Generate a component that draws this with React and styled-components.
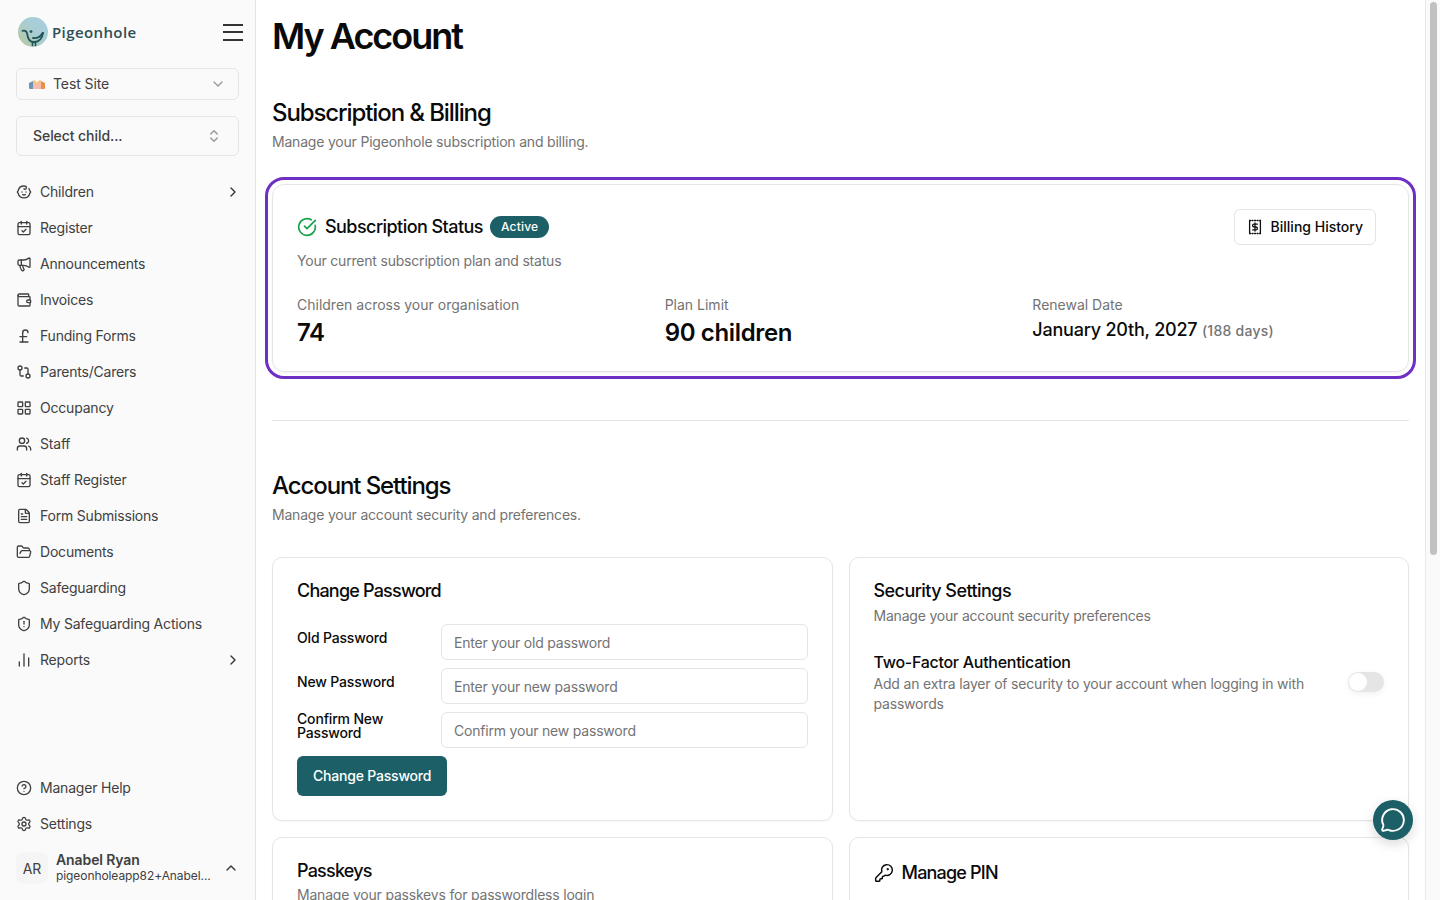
import styled, { createGlobalStyle } from "styled-components";
import {
  Baby,
  CalendarCheck,
  ChartNoAxesColumn,
  ChevronDown,
  ChevronRight,
  ChevronUp,
  ChevronsUpDown,
  CircleCheckBig,
  CircleHelp,
  FileText,
  FolderOpen,
  GitCompare,
  KeyRound,
  LayoutGrid,
  Megaphone,
  MessageCircle,
  PoundSterling,
  Settings,
  Shield,
  ShieldAlert,
  Users,
  Wallet,
} from "lucide-react";

const BillIcon = () => (
  <svg width="16" height="16" viewBox="0 0 16 16" fill="none" stroke="#111" strokeWidth="1.3" strokeLinecap="round" strokeLinejoin="round">
    <path d="M2.6 1.5v13M13.4 1.5v13" />
    <path d="M2.6 1.5h10.8M2.6 14.5h10.8" strokeDasharray="1 1.5" />
    <path d="M10.4 5.2H7a1.4 1.4 0 0 0 0 2.8h2a1.4 1.4 0 0 1 0 2.8H5.6M8 4v8" />
  </svg>
);

const Logo = () => (
  <svg width="30" height="30" viewBox="0 0 30 30">
    <defs>
      <linearGradient id="logoBg" x1="0" y1="1" x2="1" y2="0">
        <stop offset="0" stopColor="#b7c99a" />
        <stop offset="0.55" stopColor="#a9cdd4" />
        <stop offset="1" stopColor="#a5cfe0" />
      </linearGradient>
    </defs>
    <circle cx="15" cy="15" r="15" fill="url(#logoBg)" />
    <path d="M4.5 13.8c3-.6 4.4.8 4.8 3.6.5 4.6 3 7.8 7 7.6 5-.2 8-4.4 8.8-9.2" fill="none" stroke="#1f5458" strokeWidth="1.8" strokeLinecap="round" />
    <path d="M15 21c4 .6 7.4-1.4 9.6-5" fill="none" stroke="#1f5458" strokeWidth="1.8" strokeLinecap="round" />
    <circle cx="13" cy="14.6" r="1.4" fill="#1f5458" />
    <path d="M14.5 25.5v3M17.5 25.5v3" stroke="#1f5458" strokeWidth="1.6" strokeLinecap="round" />
  </svg>
);

const SiteIcon = () => (
  <svg width="16" height="9" viewBox="0 0 16 9">
    <path d="M0 3 4 1v8H1a1 1 0 0 1-1-1z" fill="#6b94b6" />
    <path d="M4 0.5h8V9H4z" fill="#f7bcae" />
    <path d="M12 1l4 2v5a1 1 0 0 1-1 1h-3z" fill="#e98f4d" />
    <path d="M4 0.5h8L8 5z" fill="#f4ca66" />
    <path d="M5.5 0 8 2.6 10.5 0z" fill="#fafafa" />
  </svg>
);

const topNav = [
  { label: "Children", Icon: Baby, more: true },
  { label: "Register", Icon: CalendarCheck },
  { label: "Announcements", Icon: Megaphone },
  { label: "Invoices", Icon: Wallet },
  { label: "Funding Forms", Icon: PoundSterling },
  { label: "Parents/Carers", Icon: GitCompare },
  { label: "Occupancy", Icon: LayoutGrid },
  { label: "Staff", Icon: Users },
  { label: "Staff Register", Icon: CalendarCheck },
  { label: "Form Submissions", Icon: FileText },
  { label: "Documents", Icon: FolderOpen },
  { label: "Safeguarding", Icon: Shield },
  { label: "My Safeguarding Actions", Icon: ShieldAlert },
  { label: "Reports", Icon: ChartNoAxesColumn, more: true },
];

const bottomNav = [
  { label: "Manager Help", Icon: CircleHelp },
  { label: "Settings", Icon: Settings },
];

const NavRow = ({ label, Icon, more }) => (
  <NavItem>
    <Icon size={16} strokeWidth={2} />
    <NavLabel>{label}</NavLabel>
    {more && <RowChevron size={16} strokeWidth={2} />}
  </NavItem>
);

export default function App() {
  return (
    <>
      <GlobalStyle />
      <Page>
        <Sidebar>
          <Brand>
            <BrandName>
              <Logo />
              <BrandText>Pigeonhole</BrandText>
            </BrandName>
            <Burger aria-label="menu">
              <span />
              <span />
              <span />
            </Burger>
          </Brand>

          <SiteSelect>
            <SiteIcon />
            <SiteName>Test Site</SiteName>
            <ChevronDown size={16} color="#999" />
          </SiteSelect>
          <ChildSelect>
            <span>Select child...</span>
            <ChevronsUpDown size={16} color="#999" />
          </ChildSelect>

          <Nav>
            {topNav.map((item) => (
              <NavRow key={item.label} {...item} />
            ))}
          </Nav>

          <BottomNav>
            {bottomNav.map((item) => (
              <NavRow key={item.label} {...item} />
            ))}
            <UserRow>
              <Avatar>AR</Avatar>
              <UserText>
                <UserName>Anabel Ryan</UserName>
                <UserMail>pigeonholeapp82+Anabel...</UserMail>
              </UserText>
              <ChevronUp size={16} color="#333" />
            </UserRow>
          </BottomNav>
        </Sidebar>

        <Main>
          <PageTitle>My Account</PageTitle>

          <SectionTitle>Subscription &amp; Billing</SectionTitle>
          <SectionSub>Manage your Pigeonhole subscription and billing.</SectionSub>

          <StatusCard>
            <StatusHead>
              <div>
                <StatusTitleRow>
                  <CircleCheckBig size={20} color="#16a34a" strokeWidth={2} />
                  <CardTitle>Subscription Status</CardTitle>
                  <Badge>Active</Badge>
                </StatusTitleRow>
                <CardSub $gap={6}>Your current subscription plan and status</CardSub>
              </div>
              <OutlineButton>
                <BillIcon />
                Billing History
              </OutlineButton>
            </StatusHead>
            <Stats>
              <div>
                <StatLabel>Children across your organisation</StatLabel>
                <StatValue>74</StatValue>
              </div>
              <div>
                <StatLabel>Plan Limit</StatLabel>
                <StatValue>90 children</StatValue>
              </div>
              <div>
                <StatLabel>Renewal Date</StatLabel>
                <RenewValue>
                  January 20th, 2027 <Days>(188 days)</Days>
                </RenewValue>
              </div>
            </Stats>
          </StatusCard>

          <Divider />

          <SectionTitle>Account Settings</SectionTitle>
          <SectionSub>Manage your account security and preferences.</SectionSub>

          <CardGrid>
            <Card>
              <TightTitle>Change Password</TightTitle>
              <PasswordForm>
                <FieldRow>
                  <FieldLabel $pad={7}>Old Password</FieldLabel>
                  <TextInput type="password" placeholder="Enter your old password" />
                </FieldRow>
                <FieldRow>
                  <FieldLabel $pad={7}>New Password</FieldLabel>
                  <TextInput type="password" placeholder="Enter your new password" />
                </FieldRow>
                <FieldRow>
                  <FieldLabel $pad={0}>Confirm New Password</FieldLabel>
                  <TextInput type="password" placeholder="Confirm your new password" />
                </FieldRow>
              </PasswordForm>
              <PrimaryButton>Change Password</PrimaryButton>
            </Card>

            <Card>
              <CardTitle>Security Settings</CardTitle>
              <CardSub $gap={1}>Manage your account security preferences</CardSub>
              <TwoFactor>
                <div>
                  <TwoFactorTitle>Two-Factor Authentication</TwoFactorTitle>
                  <TwoFactorText>
                    Add an extra layer of security to your account when logging in with passwords
                  </TwoFactorText>
                </div>
                <Toggle />
              </TwoFactor>
            </Card>

            <LowerCard>
              <TightTitle>Passkeys</TightTitle>
              <CardSub $gap={0}>Manage your passkeys for passwordless login</CardSub>
            </LowerCard>

            <LowerCard>
              <PinTitle>
                <KeyRound size={20} strokeWidth={1.75} />
                <TightTitle>Manage PIN</TightTitle>
              </PinTitle>
            </LowerCard>
          </CardGrid>
        </Main>

        <ScrollRail>
          <ScrollThumb />
        </ScrollRail>

        <ChatButton aria-label="chat">
          <MessageCircle size={26} strokeWidth={1.75} />
        </ChatButton>
      </Page>
    </>
  );
}

const GlobalStyle = createGlobalStyle`
  html, body {
    margin: 0;
    height: 100%;
    overflow: hidden;
  }
  body {
    font-family: Inter, "Liberation Sans", sans-serif;
    color: #0a0a0a;
    background: #fff;
  }
  * {
    box-sizing: border-box;
  }
`;

const Page = styled.div`
  display: flex;
  height: 100vh;
`;

const Sidebar = styled.aside`
  width: 256px;
  flex-shrink: 0;
  display: flex;
  flex-direction: column;
  padding: 16px;
  background: #fafafa;
  border-right: 1px solid #e5e5e5;
`;

const Brand = styled.div`
  display: flex;
  align-items: center;
  justify-content: space-between;
  height: 32px;
  padding-left: 2px;
`;

const BrandName = styled.div`
  display: flex;
  align-items: center;
  gap: 4px;
`;

const BrandText = styled.span`
  padding-bottom: 1px;
  font-family: "Open Sans", sans-serif;
  font-size: 15px;
  font-weight: 600;
  letter-spacing: 0.4px;
  color: #2f4f55;
`;

const Burger = styled.button`
  display: flex;
  flex-direction: column;
  gap: 5.5px;
  width: 20px;
  margin-right: -4px;
  padding: 0;
  border: 0;
  background: none;

  span {
    display: block;
    height: 2px;
    background: #333;
  }
`;

const SiteSelect = styled.div`
  display: flex;
  align-items: center;
  height: 32px;
  margin-top: 20px;
  padding: 0 12px;
  border: 1px solid #e5e5e5;
  border-radius: 6px;
  font-size: 14px;
  letter-spacing: -0.1px;
  color: #404040;
`;

const SiteName = styled.span`
  flex: 1;
  margin-left: 8px;
  padding-bottom: 2px;
`;

const ChildSelect = styled.div`
  display: flex;
  align-items: center;
  justify-content: space-between;
  height: 40px;
  margin-top: 16px;
  padding: 0 16px;
  border: 1px solid #e5e5e5;
  border-radius: 6px;
  font-size: 14px;
  font-weight: 500;
  letter-spacing: -0.07px;
  color: #404040;

  span {
    padding-bottom: 2px;
  }
`;

const Nav = styled.nav`
  display: flex;
  flex-direction: column;
  margin-top: 18px;
`;

const BottomNav = styled.div`
  display: flex;
  flex-direction: column;
  margin-top: auto;
`;

const NavItem = styled.div`
  display: flex;
  align-items: center;
  gap: 8px;
  height: 36px;
  font-size: 14px;
  letter-spacing: -0.2px;
  color: #404040;
`;

const NavLabel = styled.span`
  flex: 1;
  padding-bottom: 2px;
`;

const RowChevron = styled(ChevronRight)`
  flex-shrink: 0;
  margin-right: -2px;
  color: #333;
`;

const UserRow = styled.div`
  display: flex;
  align-items: center;
  gap: 8px;
  margin-top: 10px;
  height: 32px;
`;

const Avatar = styled.div`
  width: 32px;
  height: 32px;
  display: flex;
  align-items: center;
  justify-content: center;
  border-radius: 8px;
  background: #f5f5f5;
  font-size: 14px;
  color: #404040;
`;

const UserText = styled.div`
  flex: 1;
  min-width: 0;
  line-height: 16px;
`;

const UserName = styled.div`
  font-size: 14px;
  font-weight: 600;
  letter-spacing: -0.1px;
  color: #404040;
`;

const UserMail = styled.div`
  font-size: 12px;
  letter-spacing: -0.08px;
  color: #404040;
  white-space: nowrap;
`;

const Main = styled.main`
  flex: 1;
  min-width: 0;
  height: 100vh;
  overflow: hidden;
  padding: 16px;
`;

const ScrollRail = styled.div`
  width: 15px;
  flex-shrink: 0;
  padding: 2px 3px 0 4px;
  background: #fafafa;
  border-left: 1px solid #e8e8e8;
`;

const ScrollThumb = styled.div`
  height: 553px;
  border-radius: 4px;
  background: #c1c1c1;
`;

const PageTitle = styled.h1`
  margin: 0;
  font-size: 36px;
  line-height: 40px;
  font-weight: 600;
  letter-spacing: -2px;
`;

const SectionTitle = styled.h2`
  margin: 41px 0 0;
  font-size: 24px;
  line-height: 32px;
  font-weight: 500;
  letter-spacing: -1.1px;
`;

const SectionSub = styled.p`
  margin: 3px 0 0;
  font-size: 14px;
  line-height: 20px;
  letter-spacing: -0.2px;
  color: #737373;
`;

const StatusCard = styled.section`
  margin-top: 32px;
  padding: 24px;
  height: 188px;
  border: 1px solid #e5e5e5;
  border-radius: 12px;
  outline: 3px solid #6d2fc4;
  outline-offset: 4px;
  box-shadow: 0 1px 2px rgba(0, 0, 0, 0.05);
`;

const StatusHead = styled.div`
  display: flex;
  justify-content: space-between;
  align-items: flex-start;
  padding-right: 8px;
`;

const StatusTitleRow = styled.div`
  display: flex;
  align-items: center;
  gap: 8px;
  height: 36px;
`;

const CardTitle = styled.h3`
  margin: 0;
  font-size: 18px;
  line-height: 28px;
  font-weight: 500;
  letter-spacing: -0.55px;
`;

const TightTitle = styled(CardTitle)`
  letter-spacing: -0.8px;
`;

const Badge = styled.span`
  display: inline-flex;
  align-items: center;
  height: 22px;
  margin-left: -1px;
  padding: 0 11px 1px;
  border-radius: 11px;
  background: #1c5f66;
  color: #fff;
  font-size: 12px;
  font-weight: 500;
  letter-spacing: 0.2px;
`;

const CardSub = styled.p`
  margin: ${({ $gap }) => $gap}px 0 0;
  font-size: 14px;
  line-height: 20px;
  letter-spacing: -0.2px;
  color: #737373;
`;

const OutlineButton = styled.button`
  display: flex;
  align-items: center;
  gap: 8px;
  height: 36px;
  padding: 0 12px 1px;
  border: 1px solid #e5e5e5;
  border-radius: 6px;
  background: #fff;
  font: 500 14px Inter, sans-serif;
  color: #0a0a0a;
`;

const Stats = styled.div`
  display: grid;
  grid-template-columns: repeat(3, 1fr);
  gap: 16px;
  margin-top: 24px;
`;

const StatLabel = styled.div`
  font-size: 14px;
  line-height: 20px;
  color: #737373;
`;

const StatValue = styled.div`
  margin-top: 2px;
  font-size: 24px;
  line-height: 32px;
  font-weight: 600;
  letter-spacing: -0.35px;
`;

const RenewValue = styled.div`
  margin-top: 1px;
  font-size: 18px;
  line-height: 28px;
  font-weight: 500;
  letter-spacing: -0.22px;
`;

const Days = styled.span`
  font-size: 14px;
  letter-spacing: 0.25px;
  color: #737373;
`;

const Divider = styled.hr`
  margin: 48px 0 49px;
  border: 0;
  border-top: 1px solid #e5e5e5;
`;

const CardGrid = styled.div`
  display: grid;
  grid-template-columns: 1fr 1fr;
  gap: 16px;
  margin-top: 32px;
`;

const Card = styled.section`
  height: 264px;
  padding: 19px 24px;
  border: 1px solid #e5e5e5;
  border-radius: 10px;
  box-shadow: 0 1px 2px rgba(0, 0, 0, 0.04);
`;

const LowerCard = styled(Card)`
  height: 600px;
`;

const PasswordForm = styled.div`
  display: flex;
  flex-direction: column;
  gap: 8px;
  margin-top: 19px;
`;

const FieldRow = styled.div`
  display: grid;
  grid-template-columns: 144px 1fr;
  align-items: start;
`;

const FieldLabel = styled.label`
  padding-top: ${({ $pad }) => $pad}px;
  font-size: 14px;
  line-height: 14px;
  font-weight: 500;
  letter-spacing: -0.17px;
`;

const TextInput = styled.input`
  height: 36px;
  width: 100%;
  padding: 0 12px;
  border: 1px solid #e5e5e5;
  border-radius: 6px;
  background: #fff;
  font: 400 14px Inter, sans-serif;
  letter-spacing: -0.2px;

  &::placeholder {
    color: #737373;
  }
`;

const PrimaryButton = styled.button`
  display: block;
  height: 40px;
  margin-top: 8px;
  padding: 0 16px 1px;
  border: 0;
  border-radius: 6px;
  background: #1c5f66;
  color: #fff;
  font: 500 14px Inter, sans-serif;
  letter-spacing: -0.2px;
`;

const TwoFactor = styled.div`
  display: flex;
  justify-content: space-between;
  align-items: flex-start;
  gap: 32px;
  margin-top: 24px;
`;

const TwoFactorTitle = styled.div`
  font-size: 16px;
  line-height: 24px;
  font-weight: 500;
  letter-spacing: -0.28px;
`;

const TwoFactorText = styled.div`
  font-size: 14px;
  line-height: 20px;
  letter-spacing: -0.19px;
  color: #737373;
`;

const Toggle = styled.span`
  position: relative;
  flex-shrink: 0;
  width: 36px;
  height: 20px;
  margin-top: 22px;
  border-radius: 10px;
  background: #e5e5e5;
  box-shadow: 0 2px 6px rgba(0, 0, 0, 0.06);

  &::after {
    content: "";
    position: absolute;
    top: 1px;
    left: 1px;
    width: 18px;
    height: 18px;
    border-radius: 50%;
    background: #fff;
  }
`;

const PinTitle = styled.div`
  display: flex;
  align-items: center;
  gap: 8px;
  margin-top: 2px;
`;

const ChatButton = styled.button`
  position: fixed;
  left: 1373px;
  top: 800px;
  width: 40px;
  height: 40px;
  display: flex;
  align-items: center;
  justify-content: center;
  padding: 0;
  border: 0;
  border-radius: 50%;
  background: #1c5f66;
  color: #fff;
  box-shadow: 0 4px 12px rgba(0, 0, 0, 0.15);
`;
